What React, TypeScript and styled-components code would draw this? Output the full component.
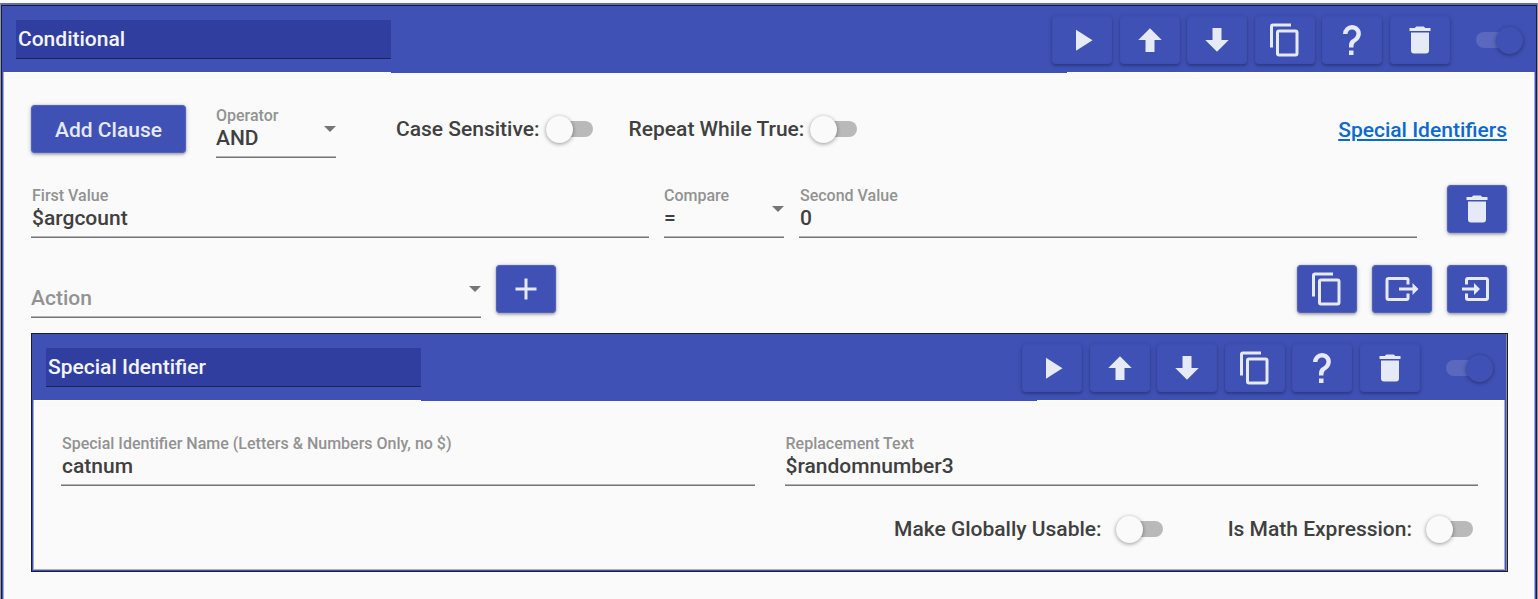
import React, { useId, useState } from "react";
import styled, { createGlobalStyle } from "styled-components";

const GlobalStyle = createGlobalStyle`
  *, *::before, *::after { box-sizing: border-box; }
  body { margin: 0; background: #fafafa; }
  body, button, input, select {
    font-family: Roboto, "Liberation Sans", sans-serif;
    font-size: 21px;
    font-weight: 500;
    color: #404040;
  }
`;

const primary = "#3f51b5";
const onPrimary = "#e6e9f6";

const Page = styled.main`
  display: flex;
  flex-direction: column;
  min-height: 100vh;
  padding-top: 3px;
`;

const OuterFrame = styled.div`
  display: flex;
  flex-direction: column;
  flex: 1;
  border-style: solid;
  border-width: 2px 1px 0;
  border-color: #5c6bc0 #8f96bd;
`;

const Card = styled.section<{ $open?: boolean }>`
  display: flex;
  flex-direction: column;
  flex: ${(p) => (p.$open ? 1 : "none")};
  padding-right: ${(p) => (p.$open ? 0 : 1)}px;
  border: 1px solid #1d1d26;
  border-bottom-width: ${(p) => (p.$open ? 0 : 1)}px;
  background: #8a8a8a;
`;

const CardHeader = styled.header`
  position: relative;
  display: flex;
  height: 66px;
  padding-left: 14px;
  background: ${primary};
`;

const TitleInput = styled.input`
  width: 375px;
  height: 39px;
  margin-top: 14px;
  padding: 0 2px;
  border: 0;
  border-bottom: 1px solid #1c2550;
  border-radius: 0;
  outline: 0;
  background: #303f9f;
  color: #f4f5fb;
`;

const HeaderFill = styled.div`
  flex: 1;
  margin-bottom: -1px;
  background: ${primary};
`;

const HeaderTools = styled.div`
  display: flex;
  justify-content: flex-end;
  width: 469px;
  padding: 10px 13px 0 0;
`;

const ToolButtons = styled.div`
  display: flex;
  flex: none;
  justify-content: space-between;
  width: 398px;
  margin-right: 26px;
`;

const CardBody = styled.div<{ $open?: boolean }>`
  display: flex;
  flex-direction: column;
  flex: 1;
  border: solid ${primary};
  border-width: 0 1px ${(p) => (p.$open ? 0 : 1)}px;
  background: #fafafa;
  box-shadow: inset 1px 0 #a3ace0, inset -1px 0 #a3ace0,
    inset 0 ${(p) => (p.$open ? 0 : -1)}px #a3ace0, inset 0 1px #ffffff;
`;

const ClauseArea = styled.div`
  display: flex;
  flex-direction: column;
  gap: 27px;
  padding: 33px 28px 15px;
`;

const NestedArea = styled.div`
  padding: 0 27px 24px 28px;
`;

const IdentifierArea = styled.div`
  display: grid;
  grid-template-columns: 1fr 1fr;
  gap: 25px 30px;
  padding: 33px 27px 23px 28px;
`;

const Row = styled.div`
  display: flex;
  align-items: flex-start;
  gap: 15px;
  height: 53px;
`;

const RaisedButton = styled.button<{ $wide?: boolean }>`
  display: flex;
  flex: none;
  align-items: center;
  justify-content: center;
  width: ${(p) => (p.$wide ? 155 : 60)}px;
  height: 48px;
  padding: ${(p) => (p.$wide ? 2 : 0)}px 0 0;
  border: 1px solid #5463b8;
  border-radius: 4px;
  background: ${primary};
  color: ${onPrimary};
  cursor: pointer;
  box-shadow: 0 0 1px rgba(63, 81, 181, 0.8), 0 2px 2px rgba(0, 0, 0, 0.16),
    0 1px 5px rgba(0, 0, 0, 0.22);
`;

const ToolButton = styled(RaisedButton)`
  border-color: #3d4fb1;
`;

const Glyph = styled.svg`
  width: 36px;
  height: 36px;
  fill: currentColor;
`;

const FieldBox = styled.div<{ $width?: number }>`
  display: grid;
  flex: ${(p) => (p.$width ? "none" : 1)};
  width: ${(p) => (p.$width ? `${p.$width}px` : "auto")};
  min-width: 0;
  height: 51px;
  margin-top: 2px;
  grid-template: 18px 31px / 1fr;
  border-bottom: 1px solid #757575;
  box-shadow: inset 0 -1px #b4b4b4;
`;

const FieldLabel = styled.label<{ $inset?: boolean }>`
  grid-area: 1 / 1;
  padding-left: ${(p) => (p.$inset ? 1 : 0)}px;
  font-size: 16px;
  line-height: 18px;
  color: #929292;
  white-space: nowrap;
`;

const TextInput = styled.input`
  grid-area: 2 / 1;
  width: 100%;
  height: 26px;
  padding: 0 1px;
  border: 0;
  outline: 0;
  background: transparent;
`;

const Select = styled.select<{ $empty?: boolean }>`
  grid-area: 2 / 1;
  width: 100%;
  height: 26px;
  padding: 0;
  border: 0;
  outline: 0;
  appearance: none;
  background: transparent;
  color: ${(p) => (p.$empty ? "#929292" : "#404040")};
`;

const Caret = styled.svg`
  grid-area: 1 / 1 / 3 / 2;
  justify-self: end;
  width: 12px;
  height: 6px;
  margin-top: 19px;
  fill: #757575;
  pointer-events: none;
`;

const SwitchLabel = styled.label<{ $gap: number }>`
  display: flex;
  align-items: center;
  gap: ${(p) => p.$gap}px;
  height: 48px;
  white-space: nowrap;
`;

const SwitchInput = styled.input<{ $header?: boolean }>`
  position: relative;
  display: flex;
  flex: none;
  align-items: center;
  width: 47px;
  height: 27px;
  margin: 0;
  appearance: none;
  cursor: pointer;

  &::before {
    content: "";
    width: 47px;
    height: 16px;
    border-radius: 8px;
    background: ${(p) => (p.$header ? "#5a69be" : "#b9b9b9")};
  }
  &::after {
    content: "";
    position: absolute;
    top: 0;
    left: 0;
    width: 27px;
    height: 27px;
    border-radius: 50%;
    background: ${(p) => (p.$header ? primary : "#fafafa")};
    box-shadow: 0 1px 4px rgba(0, 0, 0, 0.4);
  }
  &:checked::after {
    left: 20px;
  }
`;

const HeaderSwitch = styled.div`
  display: flex;
  align-items: center;
  height: 48px;
`;

const Switches = styled.div`
  display: flex;
  gap: 36px;
  padding-left: 45px;
`;

const BottomSwitches = styled.div`
  display: flex;
  grid-column: 1 / -1;
  align-items: center;
  justify-content: flex-end;
  gap: 65px;
  height: 36px;
  padding-right: 5px;
`;

const Actions = styled.div`
  display: flex;
  gap: 15px;
  margin-left: auto;
`;

const RowEnd = styled.div`
  padding-left: 15px;
`;

const HelpLink = styled.a`
  margin-left: auto;
  line-height: 50px;
  color: #0b69cf;
`;

const OperatorGroup = styled.div`
  display: flex;
  gap: 30px;
`;

const icons = {
  play: "M8,5.14V19.14L19,12.14L8,5.14Z",
  up: "M15,20H9V12H4.16L12,4.16L19.84,12H15V20Z",
  down: "M9,4H15V12H19.84L12,19.84L4.16,12H9V4Z",
  copy: "M19,21H8V7H19M19,5H8A2,2 0 0,0 6,7V21A2,2 0 0,0 8,23H19A2,2 0 0,0 21,21V7A2,2 0 0,0 19,5M16,1H4A2,2 0 0,0 2,3V17H4V3H16V1Z",
  help: "M10,19H13V22H10V19M12,2C17.35,2.22 19.68,7.62 16.5,11.67C15.67,12.67 14.33,13.33 13.67,14.17C13,15 13,16 13,17H10C10,15.33 10,13.92 10.67,12.92C11.33,11.92 12.67,11.33 13.5,10.67C15.92,8.43 15.32,5.26 12,5A3,3 0 0,0 9,8H6A6,6 0 0,1 12,2Z",
  trash: "M19,4H15.5L14.5,3H9.5L8.5,4H5V6H19M6,19A2,2 0 0,0 8,21H16A2,2 0 0,0 18,19V7H6V19Z",
  plus: "M19,13H13V19H11V13H5V11H11V5H13V11H19V13Z",
  export: "M23,12L19,8V11H10V13H19V16M1,18V6C1,4.89 1.9,4 3,4H15A2,2 0 0,1 17,6V9H15V6H3V18H15V15H17V18A2,2 0 0,1 15,20H3A2,2 0 0,1 1,18Z",
  import: "M14,12L10,8V11H2V13H10V16M20,18V6C20,4.89 19.1,4 18,4H6A2,2 0 0,0 4,6V9H6V6H18V18H6V15H4V18A2,2 0 0,0 6,20H18A2,2 0 0,0 20,18Z",
};

type IconName = keyof typeof icons;

function Icon({ name }: { name: IconName }) {
  return (
    <Glyph viewBox="0 0 24 24" aria-hidden="true">
      <path d={icons[name]} />
    </Glyph>
  );
}

function IconButton({ icon, label }: { icon: IconName; label: string }) {
  return (
    <RaisedButton type="button" aria-label={label}>
      <Icon name={icon} />
    </RaisedButton>
  );
}

const tools: [IconName, string][] = [
  ["play", "Play"],
  ["up", "Move up"],
  ["down", "Move down"],
  ["copy", "Copy"],
  ["help", "Help"],
  ["trash", "Delete"],
];

function Header({ title }: { title: string }) {
  return (
    <CardHeader>
      <TitleInput aria-label="Action name" defaultValue={title} />
      <HeaderFill />
      <HeaderTools>
        <ToolButtons>
          {tools.map(([icon, label]) => (
            <ToolButton key={icon} type="button" aria-label={label}>
              <Icon name={icon} />
            </ToolButton>
          ))}
        </ToolButtons>
        <HeaderSwitch>
          <SwitchInput $header type="checkbox" role="switch" aria-label="Enabled" defaultChecked />
        </HeaderSwitch>
      </HeaderTools>
    </CardHeader>
  );
}

function TextField({ label, value }: { label: string; value: string }) {
  const id = useId();
  return (
    <FieldBox>
      <FieldLabel htmlFor={id} $inset>{label}</FieldLabel>
      <TextInput id={id} defaultValue={value} />
    </FieldBox>
  );
}

interface SelectFieldProps {
  label: string;
  width: number;
  options: string[];
  placeholder?: boolean;
}

function SelectField({ label, width, options, placeholder }: SelectFieldProps) {
  const id = useId();
  const [value, setValue] = useState(placeholder ? "" : options[0]);
  return (
    <FieldBox $width={width}>
      {!placeholder && <FieldLabel htmlFor={id}>{label}</FieldLabel>}
      <Select
        id={id}
        aria-label={placeholder ? label : undefined}
        $empty={value === ""}
        value={value}
        onChange={(e) => setValue(e.target.value)}
      >
        {placeholder && <option value="">{label}</option>}
        {options.map((o) => (
          <option key={o}>{o}</option>
        ))}
      </Select>
      <Caret viewBox="0 0 12 6" aria-hidden="true">
        <path d="M0 0H12L6 6Z" />
      </Caret>
    </FieldBox>
  );
}

function Switch({ label, gap }: { label: string; gap: number }) {
  return (
    <SwitchLabel $gap={gap}>
      {label}
      <SwitchInput type="checkbox" role="switch" />
    </SwitchLabel>
  );
}

export default function App() {
  return (
    <Page>
      <GlobalStyle />
      <OuterFrame>
        <Card $open>
          <Header title="Conditional" />
          <CardBody $open>
            <ClauseArea>
              <Row>
                <OperatorGroup>
                  <RaisedButton type="button" $wide>Add Clause</RaisedButton>
                  <SelectField label="Operator" width={120} options={["AND", "OR"]} />
                </OperatorGroup>
                <Switches>
                  <Switch label="Case Sensitive:" gap={6} />
                  <Switch label="Repeat While True:" gap={6} />
                </Switches>
                <HelpLink href="#special-identifiers">Special Identifiers</HelpLink>
              </Row>
              <Row>
                <TextField label="First Value" value="$argcount" />
                <SelectField label="Compare" width={120} options={["=", "<>", "<", ">"]} />
                <TextField label="Second Value" value="0" />
                <RowEnd>
                  <IconButton icon="trash" label="Delete clause" />
                </RowEnd>
              </Row>
              <Row>
                <SelectField label="Action" width={450} options={["Special Identifier"]} placeholder />
                <IconButton icon="plus" label="Add action" />
                <Actions>
                  <IconButton icon="copy" label="Copy actions" />
                  <IconButton icon="export" label="Export actions" />
                  <IconButton icon="import" label="Import actions" />
                </Actions>
              </Row>
            </ClauseArea>
            <NestedArea>
              <Card>
                <Header title="Special Identifier" />
                <CardBody>
                  <IdentifierArea>
                    <TextField
                      label="Special Identifier Name (Letters & Numbers Only, no $)"
                      value="catnum"
                    />
                    <TextField label="Replacement Text" value="$randomnumber3" />
                    <BottomSwitches>
                      <Switch label="Make Globally Usable:" gap={14} />
                      <Switch label="Is Math Expression:" gap={14} />
                    </BottomSwitches>
                  </IdentifierArea>
                </CardBody>
              </Card>
            </NestedArea>
          </CardBody>
        </Card>
      </OuterFrame>
    </Page>
  );
}
